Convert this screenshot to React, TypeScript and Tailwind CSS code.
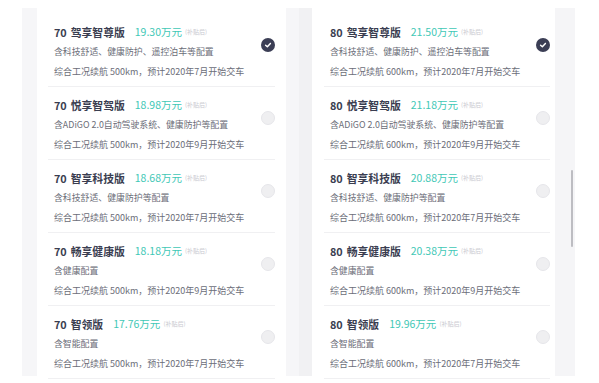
import React from "react";

type Item = { model: string; price: string; desc: string; range: string; month: string; selected?: boolean };

const left: Item[] = [
  { model: "70 驾享智尊版", price: "19.30万元", desc: "含科技舒适、健康防护、遥控泊车等配置", range: "500km", month: "7", selected: true },
  { model: "70 悦享智驾版", price: "18.98万元", desc: "含ADiGO 2.0自动驾驶系统、健康防护等配置", range: "500km", month: "9" },
  { model: "70 智享科技版", price: "18.68万元", desc: "含科技舒适、健康防护等配置", range: "500km", month: "7" },
  { model: "70 畅享健康版", price: "18.18万元", desc: "含健康配置", range: "500km", month: "9" },
  { model: "70 智领版", price: "17.76万元", desc: "含智能配置", range: "500km", month: "7" },
];

const right: Item[] = [
  { model: "80 驾享智尊版", price: "21.50万元", desc: "含科技舒适、健康防护、遥控泊车等配置", range: "600km", month: "7", selected: true },
  { model: "80 悦享智驾版", price: "21.18万元", desc: "含ADiGO 2.0自动驾驶系统、健康防护等配置", range: "600km", month: "9" },
  { model: "80 智享科技版", price: "20.88万元", desc: "含科技舒适、健康防护等配置", range: "600km", month: "7" },
  { model: "80 畅享健康版", price: "20.38万元", desc: "含健康配置", range: "600km", month: "9" },
  { model: "80 智领版", price: "19.96万元", desc: "含智能配置", range: "600km", month: "7" },
];

function Check({ on }: { on?: boolean }) {
  if (on) {
    return (
      <div className="w-[14px] h-[14px] rounded-full bg-[#3b3e55] flex items-center justify-center shrink-0">
        <svg width="8" height="8" viewBox="0 0 10 10">
          <path d="M2 5.2 L4.2 7.2 L8 3" fill="none" stroke="#ffffff" strokeWidth="1.8" strokeLinecap="round" strokeLinejoin="round" />
        </svg>
      </div>
    );
  }
  return <div className="w-[14px] h-[14px] rounded-full bg-[#efeff1] border border-[#e6e6ea] shrink-0" />;
}

function Row({ it }: { it: Item }) {
  const [num, name] = it.model.split(" ");
  return (
    <div className="h-[73px] border-b border-[#f0f0f2] flex items-start">
      <div className="flex-1 pl-[6px] pt-[11px] flex flex-col">
        <div className="h-[14px] flex items-center whitespace-nowrap">
          <span className="text-[10.8px] leading-[14px] font-bold text-[#3a3d50]">{num}</span>
          <span className="ml-[4px] text-[10.8px] leading-[14px] font-bold text-[#3a3d50]">{name}</span>
          <span className="ml-[10px] text-[10.5px] leading-[14px] text-[#3fc8b6]">{it.price}</span>
          <span className="ml-[3px] text-[6px] leading-[14px] text-[#c9c9cf]">(补贴后)</span>
        </div>
        <div className="mt-[7px] h-[12px] text-[8.9px] leading-[12px] text-[#6b6d78] whitespace-nowrap">{it.desc}</div>
        <div className="mt-[8px] h-[12px] text-[9px] leading-[12px] text-[#6b6d78] whitespace-nowrap">
          综合工况续航 {it.range}，预计2020年{it.month}月开始交车
        </div>
      </div>
      <div className="mt-[24px]">
        <Check on={it.selected} />
      </div>
    </div>
  );
}

export default function App() {
  return (
    <div
      className="w-[599px] h-[383px] bg-white overflow-hidden pt-[8px] pl-[22px]"
      style={{ fontFamily: '"Noto Sans CJK SC", "Noto Sans", sans-serif' }}
    >
      <div className="w-[553px] h-[368px] bg-[#f6f6f8] flex">
        <div className="ml-[15px] w-[249px] h-[370px] bg-white pt-[6px] pl-[11px] pr-[11px]">
          {left.map((it) => (
            <Row key={it.model} it={it} />
          ))}
        </div>
        <div className="w-[26px] h-full bg-[#f3f3f5] flex">
          <div className="w-[13px] h-full bg-[#f6f6f8]" />
          <div className="w-[13px] h-full bg-[#f1f1f3]" />
        </div>
        <div className="w-[243px] h-[370px] bg-white pt-[6px] pl-[12px] pr-[5px]">
          {right.map((it) => (
            <Row key={it.model} it={it} />
          ))}
        </div>
        <div className="w-[20px] h-full bg-[#f5f5f7] flex justify-end pr-[2px]">
          <div className="mt-[162px] w-[2px] h-[77px] rounded-full bg-[#bdbdc2]" />
        </div>
      </div>
    </div>
  );
}
